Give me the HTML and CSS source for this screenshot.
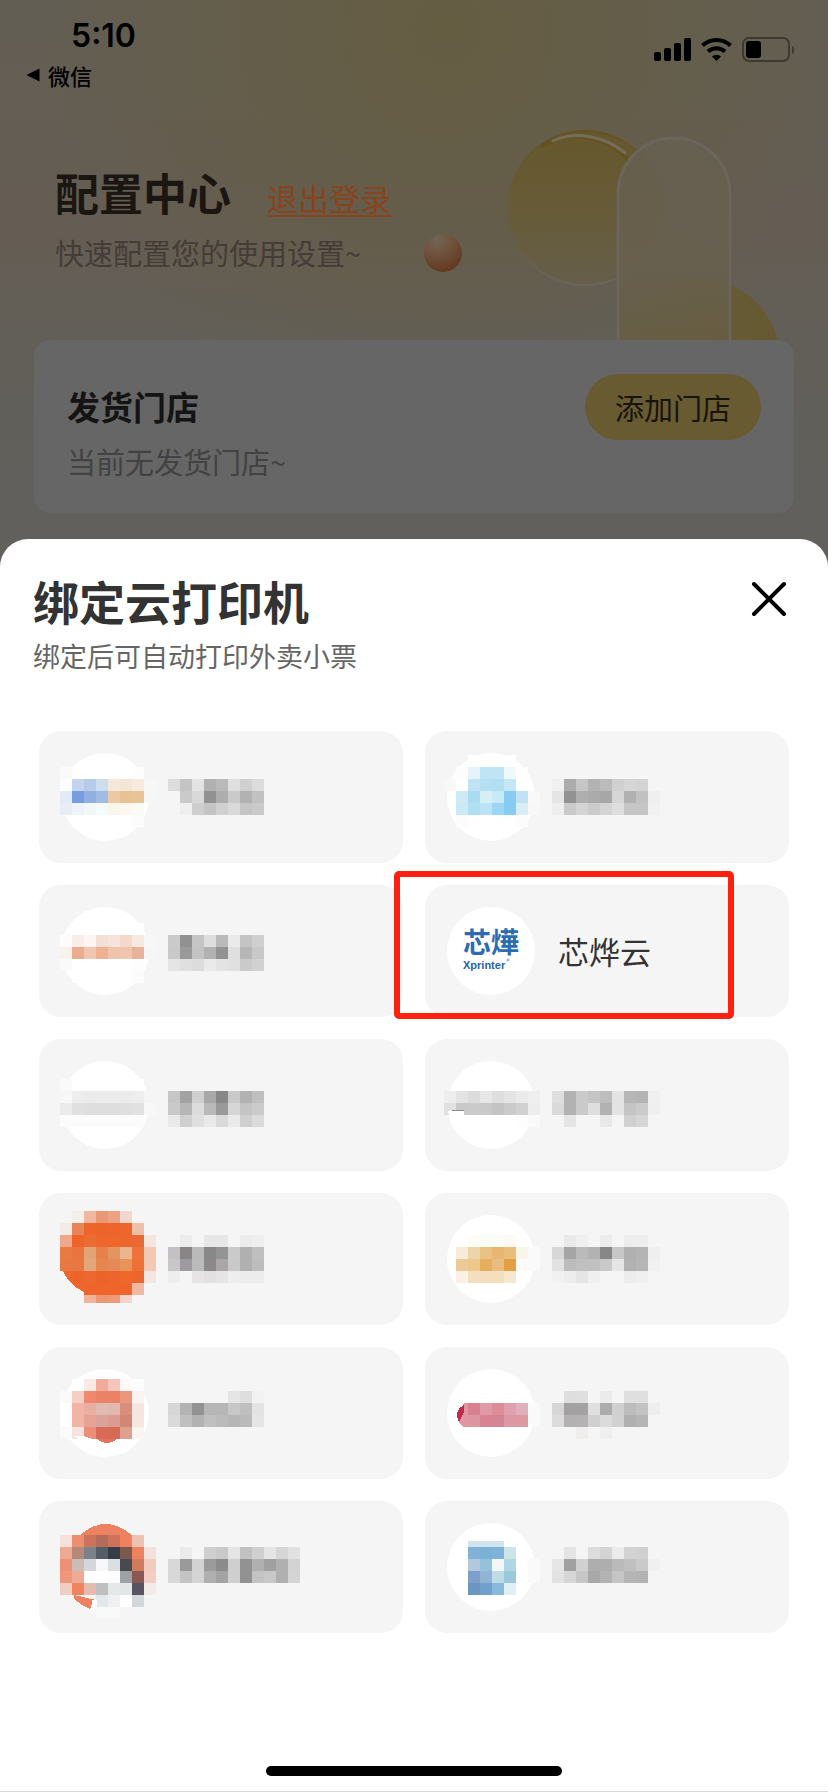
FILE: index.html
```html
<!DOCTYPE html>
<html lang="zh-CN">
  <head>
    <meta charset="UTF-8" />
    <meta name="viewport" content="width=device-width, initial-scale=1.0" />
    <title>配置中心</title>
    <link rel="stylesheet" href="styles.css" />
  </head>
  <body>
    <div class="page">
      <svg class="decor" width="300" height="230" viewBox="0 0 300 230" aria-hidden="true">
        <defs>
          <linearGradient id="coin" x1="0" y1="0" x2="0" y2="1">
            <stop offset="0" stop-color="#66572c" />
            <stop offset="0.5" stop-color="#675b37" />
            <stop offset="1" stop-color="#655e4b" />
          </linearGradient>
          <linearGradient id="coinEdge" x1="0" y1="0" x2="0" y2="1">
            <stop offset="0" stop-color="#655220" />
            <stop offset="0.6" stop-color="#675b37" stop-opacity="0" />
            <stop offset="1" stop-color="#6b665c" />
          </linearGradient>
          <linearGradient id="coinLow" x1="0" y1="0" x2="1" y2="0">
            <stop offset="0" stop-color="#665f48" />
            <stop offset="1" stop-color="#66592e" />
          </linearGradient>
          <linearGradient id="pill" x1="0" y1="0" x2="0" y2="1">
            <stop offset="0" stop-color="#666052" />
            <stop offset="0.6" stop-color="#68604e" />
            <stop offset="1" stop-color="#665d41" />
          </linearGradient>
          <radialGradient id="ball" cx="0.35" cy="0.15" r="0.9">
            <stop offset="0" stop-color="#716559" />
            <stop offset="0.4" stop-color="#70543f" />
            <stop offset="1" stop-color="#63361c" />
          </radialGradient>
        </defs>
        <circle cx="104" cy="93" r="77" fill="url(#coin)" stroke="url(#coinEdge)" stroke-width="2" />
        <path d="M60 32c24-17 62-15 88 14" fill="none" stroke="#655220" stroke-width="4" />
        <path d="M72 26c22-10 50-6 72 12" fill="none" stroke="#756d5c" stroke-width="3" stroke-linecap="round" />
        <circle cx="217" cy="245" r="82" fill="url(#coinLow)" />
        <path d="M137 240V79a56 56 0 0 1 112 0v161" fill="url(#pill)" fill-opacity="0.85" stroke="#6c655c" stroke-width="3" />
      </svg>
      <svg class="ball" width="38" height="38" viewBox="0 0 38 38" aria-hidden="true">
        <circle cx="19" cy="19" r="19" fill="url(#ball)" />
      </svg>

      <div class="statusBar">
        <div class="statusLeft">
          <span class="clock">5:10</span>
          <a class="backApp" href="#">
            <svg width="14" height="14" viewBox="0 0 14 14" aria-hidden="true">
              <path d="M13.500 .5v13L.5 7z" />
            </svg>
            微信
          </a>
        </div>
        <svg class="statusIcons" width="142" height="26" viewBox="0 0 142 26" aria-hidden="true">
          <rect x="0" y="15" width="7" height="9" rx="2" />
          <rect x="10" y="11" width="7" height="13" rx="2" />
          <rect x="20" y="6" width="7" height="18" rx="2" />
          <rect x="30" y="1" width="7" height="23" rx="2" />
          <g fill="none" stroke="#000" stroke-width="4">
            <path d="M48.500 8.500a20.500 20.500 0 0 1 28 0" />
            <path d="M54 14.500a12.500 12.500 0 0 1 17 0" />
          </g>
          <path d="M62.500 24l-4.500-4.500a6.500 6.500 0 0 1 9 0z" />
          <rect x="89" y="1" width="46" height="23" rx="6" fill="none" stroke="#3e3831" stroke-width="2" />
          <rect x="92" y="4" width="15" height="17" rx="3" />
          <path d="M138 9v8c3-1 3-7 0-8z" fill="#3e3831" />
        </svg>
      </div>

      <div class="intro">
        <h1 class="introTitle">配置中心</h1>
        <a class="logout" href="#">退出登录</a>
        <p class="introText">快速配置您的使用设置~</p>
      </div>

      <div class="storeBox">
        <div>
          <h2 class="storeTitle">发货门店</h2>
          <p class="storeText">当前无发货门店~</p>
        </div>
        <button class="addStore" type="button">添加门店</button>
      </div>

      <div class="sheet">
        <div class="sheetTop">
          <div>
            <h2 class="sheetTitle">绑定云打印机</h2>
            <p class="sheetText">绑定后可自动打印外卖小票</p>
          </div>
          <button class="closeBtn" type="button" aria-label="关闭">
            <svg width="36" height="36" viewBox="0 0 36 36" aria-hidden="true">
              <path d="M3 3l30 30M33 3L3 33" />
            </svg>
          </button>
        </div>

        <div class="printers">
          <button class="printer" type="button" data-printer="0" aria-label="打印机 1"></button>
          <button class="printer" type="button" data-printer="1" aria-label="打印机 2"></button>
          <button class="printer" type="button" data-printer="2" aria-label="打印机 3"></button>
          <button class="printer selected" type="button">
            <svg class="logo" width="88" height="88" viewBox="0 0 88 88" aria-hidden="true">
              <circle cx="44" cy="44" r="44" fill="#fff" />
              <text class="logoCn" x="16" y="46">芯燁</text>
              <text class="logoEn" x="16" y="62">Xprinter</text>
              <circle cx="61" cy="53" r="1" fill="none" stroke="#6f9dcb" />
            </svg>
            <span class="printerName">芯烨云</span>
          </button>
          <button class="printer" type="button" data-printer="3" aria-label="打印机 5"></button>
          <button class="printer" type="button" data-printer="4" aria-label="打印机 6"></button>
          <button class="printer" type="button" data-printer="5" aria-label="打印机 7"></button>
          <button class="printer" type="button" data-printer="6" aria-label="打印机 8"></button>
          <button class="printer" type="button" data-printer="7" aria-label="打印机 9"></button>
          <button class="printer" type="button" data-printer="8" aria-label="打印机 10"></button>
          <button class="printer" type="button" data-printer="9" aria-label="打印机 11"></button>
          <button class="printer" type="button" data-printer="10" aria-label="打印机 12"></button>
        </div>

        <div class="homeBar"></div>
      </div>
    </div>
    <script src="script.js"></script>
  </body>
</html>
```

FILE: styles.css
```css
*,
*::after {
  box-sizing: border-box;
}
body {
  margin: 0;
  font-family: "Noto Sans CJK SC", sans-serif;
  color: #333333;
}
h1,
h2,
p {
  margin: 0;
}
button {
  border: 0;
  padding: 0;
  font-family: inherit;
  color: inherit;
  cursor: pointer;
}
.page {
  position: relative;
  min-height: 100vh;
  display: flex;
  flex-direction: column;
  background: radial-gradient(
      circle at 54% 30px,
      #655d42 0,
      rgba(101, 93, 66, 0) 400px
    ),
    linear-gradient(#635e53 0, #655d54 240px, #625f58 340px, #61605d 540px);
}
.decor {
  position: absolute;
  top: 115px;
  right: 47px;
}
.ball {
  position: absolute;
  top: 234px;
  left: 424px;
}

/* status bar */
.statusBar {
  display: flex;
  justify-content: space-between;
  padding: 16px 32px 0 26px;
  color: black;
}
.statusLeft {
  display: flex;
  flex-direction: column;
}
.clock {
  font-family: Inter, sans-serif;
  font-size: 32px;
  font-weight: 600;
  line-height: 40px;
  margin-left: 45px;
}
.backApp {
  display: flex;
  align-items: center;
  gap: 8px;
  margin-top: 3px;
  font-size: 22px;
  font-weight: 500;
  line-height: 32px;
  color: black;
  text-decoration: none;
}
.statusIcons {
  margin-top: 21px;
}

/* page heading */
.intro {
  position: relative;
  display: grid;
  grid-template-columns: auto 1fr;
  column-gap: 36px;
  row-gap: 2px;
  align-items: baseline;
  padding: 65px 55px 66px;
}
.introTitle {
  font-size: 44px;
  font-weight: 700;
  line-height: 72px;
  color: #1b1612;
}
.logout {
  font-size: 31px;
  line-height: 40px;
  color: #88431f;
  text-decoration-thickness: 2px;
  text-underline-offset: 4px;
}
.introText {
  grid-column: 1 / -1;
  font-size: 29px;
  line-height: 44px;
  color: #443c36;
}

/* store card */
.storeBox {
  position: relative;
  display: flex;
  align-items: flex-start;
  justify-content: space-between;
  margin: 0 34px;
  padding: 34px 33px 29px;
  border-radius: 16px;
  background-color: #666666;
}
.storeTitle {
  font-size: 33px;
  font-weight: 700;
  line-height: 64px;
  color: #141414;
}
.storeText {
  font-size: 29px;
  line-height: 46px;
  color: #424242;
}
.addStore {
  padding: 11px 30px;
  border-radius: 33px;
  background-color: #685b32;
  color: #171309;
  font-size: 29px;
  line-height: 44px;
}

/* bottom sheet */
.sheet {
  position: relative;
  flex: 1;
  display: flex;
  flex-direction: column;
  margin-top: 26px;
  padding: 27px 39px 15px;
  border-radius: 28px 28px 0 0;
  border-bottom: 1px solid #d8d8d8;
  background-color: white;
}
.sheetTop {
  display: flex;
  align-items: flex-start;
  justify-content: space-between;
  margin: 0 -6px;
}
.sheetTitle {
  font-size: 46px;
  font-weight: 700;
  line-height: 68px;
}
.sheetText {
  font-size: 27px;
  line-height: 44px;
  color: #666666;
}
.closeBtn {
  display: flex;
  margin-top: 15px;
  padding: 0 8px;
  background: none;
}
.closeBtn path {
  stroke: black;
  stroke-width: 4;
  stroke-linecap: round;
}

/* printer list */
.printers {
  display: grid;
  grid-template-columns: 1fr 1fr;
  gap: 22px;
  margin-top: 53px;
}
.printer {
  position: relative;
  display: flex;
  align-items: center;
  gap: 23px;
  padding: 22px;
  border-radius: 22px;
  background-color: #f5f5f5;
}
.selected::after {
  content: "";
  position: absolute;
  top: -14px;
  left: -31px;
  width: 340px;
  height: 148px;
  border: 6px solid #ff2012;
  border-radius: 5px;
}
.printerName {
  font-size: 31px;
  line-height: 44px;
}
.mosaic {
  overflow: visible;
}
.logoCn {
  font-size: 28px;
  font-weight: 700;
  fill: #2b6cb3;
}
.logoEn {
  font-family: "Liberation Sans", sans-serif;
  font-size: 11px;
  font-weight: 700;
  fill: #2765a8;
}
.homeBar {
  width: 296px;
  height: 10px;
  margin: auto auto 0;
  border-radius: 5px;
  background-color: black;
}
```

FILE: script.js
```js
const CELL = 12;

// x, y: where the first cell starts inside the 88px high drawing
// rows: 8 cells of logo, one empty, then the name ("." = empty cell)
const printers = [
  {
    x: -1,
    y: 14,
    rows: [
      "fafafa fff fff fff fff fff fdfdfd",
      "fdfdfd c4d4ee b6cbe9 cbddef f4e9d8 f3e6d6 f7e9dd f7f7f7 . ddd c4c4c4 e3e3e3 b1b1b1 b9b9b9 dfdfdf d0d0d0 dcdcdc",
      "e2eaf6 769ddf 91b0e2 a0bbe4 eac9a3 e8c295 e8c394 f6f6f6 . . cacaca d9d9d9 919191 adadad cacaca b2b2b2 c1c1c1",
      "e9ecf3 edf2fb f2f7f8 f5fafa f8f7ee fcf8f1 fbfbf5 . . . efefef cecece c4c4c4 d0d0d0 dadada c5c5c5 cacaca",
      ". fff fff fff fff fff fcfcfc",
    ],
  },
  {
    x: -3,
    y: 2,
    rows: [
      ". . fff fff fff fff",
      ". fdfdfd e6f3f9 bee4f5 bee4f5 eff9fc fff",
      "f8f8f8 fff bfe3f4 b5e0f2 b0def2 c5e7f5 fff . . f0f0f0 acacac c6c6c6 b3b3b3 bbb d0d0d0 d5d5d5 d3d3d3",
      ". cdebf5 aadbf1 d6eff5 c8eaf7 87ccf0 c0e2f4 f9f9f9 . e5e5e5 929292 afafaf ababab a7a7a7 d6d6d6 b1b1b1 c1c1c1 efefef",
      ". cceaf5 b0dff1 bce3f5 9dd6f2 86cbf0 d7eef6 f8f8f8 . eee cacaca d4d4d4 cbcbcb d4d4d4 dedede c5c5c5 c5c5c5 f1f1f1",
      ". fcfcfc fff fff fff fff fcfcfc",
    ],
  },
  {
    x: -1,
    y: 16,
    rows: [
      ". fff fff fff fff fff fff",
      "fdfcfa faede9 fcf5f2 f4dfd7 f6e4dc f4d8cc f8e9e0 f7f7f7 . cacaca 919191 c5c5c5 dedede bababa eaeaea c4c4c4 cfcfcf",
      "f7f2ec eaae8e f0c6b0 eeb193 efc4ac f0c5af e7b297 f6f6f6 . c9c9c9 999 c3c3c3 b2b2b2 929292 dfdfdf b6b6b6 c8c8c8",
      "fafafa fff fff fff fff fff fdfdfd . . e5e5e5 dfdfdf dcdcdc eaeaea e3e3e3 e0e0e0 cacaca d1d1d1",
      ". fff fff fff fff fff fcfcfc",
    ],
  },
  {
    x: -1,
    y: 18,
    rows: [
      "fafafa fff fff fff fff fff fff",
      "f7f7f7 ededed ebebeb ececec ececec ebebeb ededed f5f5f5 . c6c6c6 a2a2a2 cfcfcf a8a8a8 878787 c9c9c9 b2b2b2 bfbfbf",
      "ebebeb e0e0e0 dedede dedede dedede dfdfdf e1e1e1 f8f8f8 . c9c9c9 b6b6b6 dcdcdc b9b9b9 999 d6d6d6 c4c4c4 cbcbcb",
      "fcfcfc fcfcfc fcfcfc fcfcfc fcfcfc fcfcfc fcfcfc . . e9e9e9 cfcfcf dfdfdf e9e9e9 dadada eaeaea cfcfcf dbdbdb",
    ],
  },
  {
    x: -3,
    y: 30,
    rows: [
      "eee e3e3e3 dcdcdc e7e7e7 dedede e4e4e4 eaeaea efefef . dedede b2b2b2 cacaca c4c4c4 bdbdbd e3e3e3 b6b6b6 b4b4b4 f0f0f0",
      "e1e1e1 c9c9c9 cacaca c9c9c9 c3c3c3 cacaca d1d1d1 ededed . dadada b2b2b2 cacaca dedede b2b2b2 e3e3e3 c4c4c4 cbcbcb efefef",
      ". fff fff fff fff fff fdfdfd f9f9f9 . . e5e5e5 . . e8e8e8 . d0d0d0 d6d6d6",
    ],
    extra: '<path fill="#fff" d="M1 50h16v4H2z"/><path fill="#888" d="M5 49h12v1H5z"/>',
  },
  {
    x: -1,
    y: -4,
    round: "none",
    rows: [
      ". f3efea f0b8a1 eb9876 eda283 f4d7cc",
      "f3ece6 e98359 ee642a ed642a ee642a ec672d efbfa8",
      "eea88a ee632a eb6c33 ed662b ed662b ed662b e96a35 f4e5de . . ececec . e7e7e7 e7e7e7 . ececec eee",
      "e97a45 e87440 e3a379 e6814b e3955f ebb68f ee7239 f3c8b5 . c3c1c3 898586 bababa 888 949494 cacaca b0b0b0 bfbfbf",
      "e97944 e87742 e4a67b e5864e e58a57 e89359 ee7037 f3c8b5 . c9c6c8 9e9b9e bcbbbc 8c898a aaa6a8 c9c9c9 b0b0b0 bdbdbd",
      ". ee632a ec682f eb632b ed652c ee672b ed652c f3e5e0 . eee . e6e4e5 e2e1e2 e6e4e5 eee ececec ececec",
      ". . ee642a ee642a ee642a ee642a efb9a2",
      ". . f0b39c ec9674 ed9a79 f3d4c8",
    ],
    extra: '<path fill="#ec662e" d="M2 56h10v12h11v9Q8 70 2 56z"/><path fill="#f5f5f5" d="M20 88h54v5H20z"/>',
  },
  {
    x: -3,
    y: 20,
    rows: [
      ". fff fdfdf8 fdfdf8 fdfdf8 fdfaf4 fff . . . e9e9e9 f0f0f0 . ececec . ededed ededed",
      ". f8ecd8 eed4ab e9c384 e9b671 e9bd7c faf5ea fafafa . d7d7d7 a5a5a5 bababa b2b2b2 878787 c7c7c7 b0b0b0 b4b4b4 efefef",
      ". ecca98 ecc98b e6af5f e9bd82 e3a042 fdfcf8 fafafa . e2e2e2 bcbcbc c0c0c0 c0c0c0 c9c9c9 e5e5e5 b2b2b2 b6b6b6 f1f1f1",
      ". f9f2e4 f3dfbe f4debb f4debc f4e8d1 fff . . f1f1f1 ededed e5e5e5 efefef . . ececec f0f0f0",
    ],
  },
  {
    x: -1,
    y: 10,
    rows: [
      ". fff f9eae5 f0ab9b f5c4ba fffaf7 fdfdfd",
      "fafafa f3cfc6 f0886d eb8265 eb8165 ec967e faf3f0 . . . . . . . e5e5e5 dedede f2f2f2",
      "fff f3b3a5 e8aea2 e1bbb3 e1b8af d98d7b f5e5e1 . . d7d7d7 b3b3b3 929292 b6b6b6 b7b7b7 c7c7c7 bfbfbf e3e3e3",
      "fff f3b4a8 e6a496 daa29b dc9b90 d18676 f5e6e2 . . dadada bfbfbf b2b2b2 c0c0c0 bbb b6b6b6 bababa e5e5e5",
      "fafafa f6e3df ed8f78 d76b55 d66b53 dfa091 fcf6f3",
    ],
    extra: '<path fill="#e8705c" d="M36 70h20q-10 8-20 0z"/><path fill="#fff" d="M12 67h11l11 4-11 2z"/>',
  },
  {
    x: -3,
    y: 22,
    rows: [
      ". . . . . . . . . . dedede dfdfdf . ebebeb . dfdfdf dfdfdf",
      ". . d9808f df99a7 dc8d98 e0a1af dfb0bb fafafa . d6d6d6 a3a1a2 a3a1a2 dfdfdf acacac d0d0d0 bcbcbc c3c3c3 eee",
      ". . dc96a0 d88294 d38495 dc98a4 dd99a1 fafafa . dcdcdc b4b1b2 b5b2b3 d0d0d0 dbdbdb d1d1d1 b0b0b0 b5b5b5",
      ". . . . . . . . . . . f0eded . f0eeee",
    ],
    extra: '<path fill="#e095a3" d="M21 34v24h-4q-5-2-6-8l6-16z"/><path fill="#c5294a" d="M17 36v7l-5 10q-6-11 5-17z"/>',
  },
  {
    x: -1,
    y: 12,
    round: "none",
    rows: [
      "f5e1dc eb8f6f cc745a b36c59 cd7359 f08160 eec2b1",
      "eea993 b68878 7b8188 555d66 353d49 7b594f ee8160 f3e1dc . . ebebeb f5f5f5 d0d0d0 c9c9c9 e5e5e5 c1c1c1 d0d0d0 e5e5e5 d6d6d6 e1e1e1",
      "ef9074 ccbcb8 d3d7d9 f8f8fa dcdfe2 474b4f d27a5c f0cbbe . d8d8d8 9a9a9a d3d3d3 9b9b9b 8b8b8b cfcfcf 929292 b0b0b0 a0a0a0 b0b0b0 d3d3d3",
      "f0967c edab95 fff fff fdfdfd 9da2a8 895850 f2cdc2 . d8d8d8 c4c4c4 d4d4d4 afafaf a3a3a3 cfcfcf 929292 c3c3c3 c8c8c8 b0b0b0 d4d4d4",
      "f0cfc3 ee8460 e4bbae bfbfc0 e4e8e8 e2e7e6 585360 f3ebea",
      ". . . e3e8ea eef0f2 fff d3d7db",
      ". . . f9f9f9 f9f9f9",
    ],
    extra: '<path fill="#ee8160" d="M19 12q25-22 52 0z"/><path fill="#f08160" d="M13 72l22 5-6 9Q20 82 13 76z"/><path fill="#fff" d="M31 77h5v8l-6 3z"/>',
  },
  {
    x: -3,
    y: 24,
    rows: [
      ". . 84afd6 79b2d6 7fb2d8 cce3e8 . . . . e4e4e4 . dcdcdc d4d4d4 ebebeb d2d2d2 d0d0d0",
      ". . b3c8de 96c1da f2f7f7 afd6e2 . fafafa . e6e6e6 a1a1a1 d0d0d0 aeaeae aeaeae bababa c0c0c0 cacaca f0f0f0",
      ". . 7e9fcb 8fb4d4 bfdbe5 99c9db . fafafa . e2e2e2 d6d6d6 c6c6c6 a8a8a8 b3b3b3 c5c5c5 b5b5b5 b3b3b3",
      ". . 6c95c1 71a0cb 87bbd9 e2eff5",
    ],
    extra: '<path fill="#d1e5ef" d="M21 18h36v6H21z"/>',
  },
];

document.querySelectorAll("[data-printer]").forEach(function (box) {
  const printer = printers[box.dataset.printer];
  let cells = "";
  printer.rows.forEach(function (row, r) {
    row.split(" ").forEach(function (color, c) {
      if (color === ".") return;
      const x = printer.x + c * CELL;
      const y = printer.y + r * CELL;
      cells += `<rect x="${x}" y="${y}" width="${CELL}" height="${CELL}" fill="#${color}"/>`;
    });
  });
  box.innerHTML = `<svg class="mosaic" width="240" height="88" viewBox="0 0 240 88" shape-rendering="crispEdges">
    <circle cx="44" cy="44" r="44" fill="${printer.round || "#fff"}" shape-rendering="auto"/>
    ${cells}${printer.extra || ""}
  </svg>`;
});
```
